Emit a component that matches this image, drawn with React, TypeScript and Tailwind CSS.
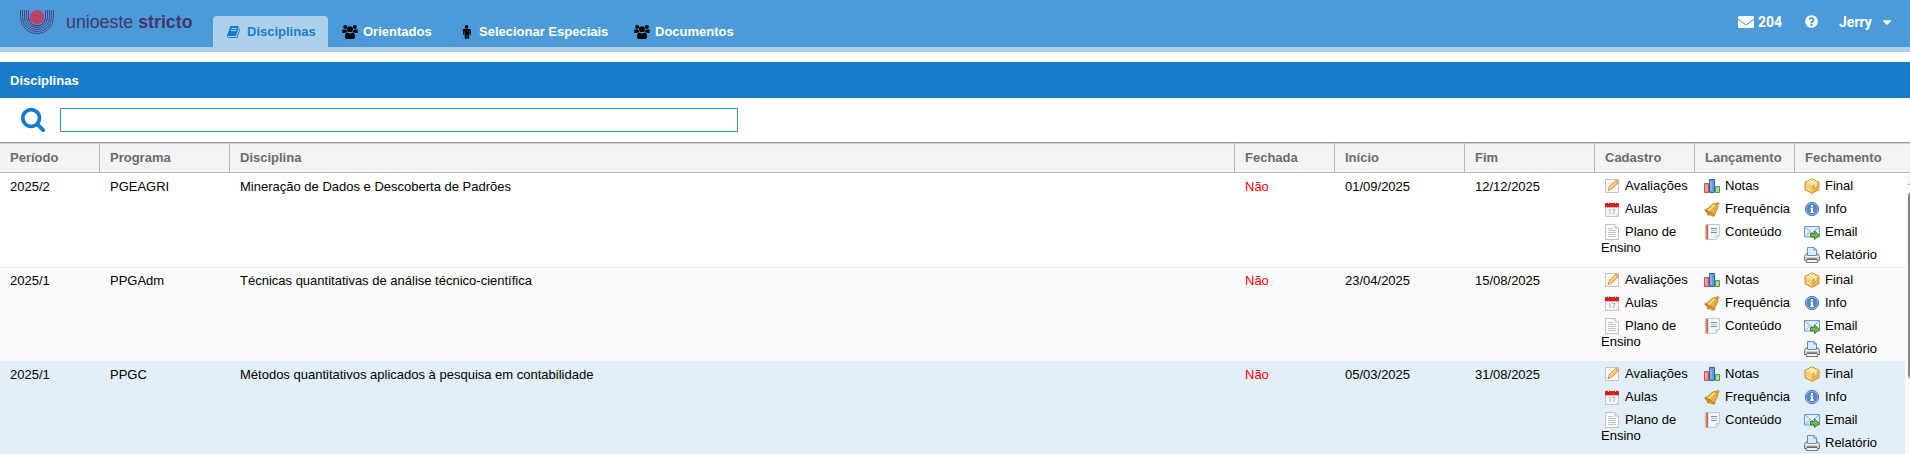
import type { ReactNode } from 'react';
import { FaCaretDown, FaEnvelope, FaQuestionCircle } from 'react-icons/fa';

type IconProps = { name: string };

interface Course {
  period: string;
  program: string;
  title: string;
  start: string;
  end: string;
  rowClass: string;
}

const COURSES: Course[] = [
  {
    period: '2025/2',
    program: 'PGEAGRI',
    title: 'Mineração de Dados e Descoberta de Padrões',
    start: '01/09/2025',
    end: '12/12/2025',
    rowClass: 'bg-white border-t-white',
  },
  {
    period: '2025/1',
    program: 'PPGAdm',
    title: 'Técnicas quantitativas de análise técnico-científica',
    start: '23/04/2025',
    end: '15/08/2025',
    rowClass: 'bg-[#fafafa] border-t-[#ededed]',
  },
  {
    period: '2025/1',
    program: 'PPGC',
    title: 'Métodos quantitativos aplicados à pesquisa em contabilidade',
    start: '05/03/2025',
    end: '31/08/2025',
    rowClass: 'bg-[#e2eef8] border-t-[#e2eef8]',
  },
];

const HEADERS = [
  'Período',
  'Programa',
  'Disciplina',
  'Fechada',
  'Início',
  'Fim',
  'Cadastro',
  'Lançamento',
  'Fechamento',
];

const GRID = 'grid grid-cols-[100px_130px_1005px_100px_130px_130px_100px_100px_1fr]';

function Logo() {
  return (
    <svg width="34" height="24" viewBox="0 0 34 24" fill="none">
      <g stroke="#4d3a78" strokeWidth="0.9">
        <path d="M.5 0v7.500a16.500 16 0 0 0 33 0V0" />
        <path d="M2.500 0v7.500a14.500 14 0 0 0 29 0V0" />
        <path d="M4.500 0v7.500a12.500 12 0 0 0 25 0V0" />
        <path d="M6.500 0v7.500a10.500 10 0 0 0 21 0V0" />
        <path d="M8.500 0v7.500a8.500 8.300 0 0 0 17 0V0" />
      </g>
      <circle cx="17" cy="7.200" r="8" fill="#4c9bd8" />
      <path d="M8.500 7.500a8.500 8.300 0 0 0 17 0" stroke="#4d3a78" strokeWidth="0.9" />
      <circle cx="17" cy="7.200" r="7.200" fill="#b84468" />
    </svg>
  );
}

function BookIcon() {
  return (
    <svg width="14" height="14" viewBox="0 0 1792 1792" fill="currentColor">
      <path d="M1639 478q40 57 18 129l-275 906q-19 64-76.5 107.5t-122.5 43.5h-923q-77 0-148.5-53.5t-99.5-131.5q-24-67-2-127 0-4 3-27t4-37q1-8-3-21.5t-3-19.5q2-11 8-21t16.5-23.5 16.5-23.5q23-38 45-91.5t30-91.5q3-10 .5-30t-.5-28q3-11 17-28t17-23q21-36 42-92t25-90q1-9-2.5-32t.5-28q4-13 22-30.5t22-22.5q19-26 42.5-84.5t27.5-96.500q1-8-3-25.5t-2-26.5q2-8 9-18t18-23 17-21q8-12 16.5-30.5t15-35 16-36 19.5-32 26.5-23.5 36-11.5 47.5 5.5l-1 3q38-9 51-9h761q74 0 114 56t18 130l-274 906q-36 119-71.5 153.5t-128.5 34.5h-869q-27 0-38 15-11 16-1 43 24 70 144 70h923q29 0 56-15.5t35-41.5l300-987q7-22 5-57 38 15 59 43zm-1064 2q-4 13 2 22.5t20 9.5h608q13 0 25.5-9.5t16.5-22.5l21-64q4-13-2-22.5t-20-9.5h-608q-13 0-25.5 9.5t-16.5 22.5zm-83 256q-4 13 2 22.5t20 9.5h608q13 0 25.5-9.5t16.5-22.5l21-64q4-13-2-22.5t-20-9.5h-608q-13 0-25.5 9.5t-16.5 22.5z" />
    </svg>
  );
}

function SearchIcon() {
  return (
    <svg width="26" height="26" viewBox="0 0 1792 1792" fill="#177dca" className="mr-[14px] -mt-[2px]">
      <path d="M1216 832q0-185-131.5-316.5t-316.5-131.5-316.5 131.5-131.5 316.5 131.5 316.5 316.5 131.5 316.5-131.5 131.5-316.5zm512 832q0 52-38 90t-90 38q-54 0-90-38l-343-342q-179 124-399 124-143 0-273.5-55.5t-225-150-150-225-55.5-273.5 55.5-273.5 150-225 225-150 273.5-55.5 273.5 55.5 225 150 150 225 55.5 273.5q0 220-124 399l343 343q37 37 37 90z" />
    </svg>
  );
}

function GroupIcon() {
  return (
    <svg width="16" height="14" viewBox="0 0 16 14" fill="#000">
      <circle cx="3.2" cy="2.1" r="2" />
      <circle cx="12.8" cy="2.1" r="2" />
      <circle cx="8" cy="4.2" r="2.9" />
      <path d="M.3 7.4V5.6C.3 4.7.8 4.3 1.4 4.3c.7.5 2 .7 3 .3.1 1 .4 1.8 1 2.4-.9 0-1.7.3-2.2.9H1.1c-.5 0-.8-.2-.8-.5zM15.700 7.400V5.600c0-.9-.5-1.300-1.100-1.300-.7.5-2 .7-3 .3-.1 1-.4 1.800-1 2.400.9 0 1.700.3 2.200.9h2.100c.5 0 .8-.2.8-.5zM3 12c0-2.400.6-4.300 2.300-4.500 1.500 1.300 3.900 1.300 5.400 0C12.400 7.700 13 9.600 13 12c0 1.300-.8 2-2 2H5c-1.200 0-2-.7-2-2z" />
    </svg>
  );
}

function PersonIcon() {
  return (
    <svg width="9" height="14" viewBox="0 0 9 14" fill="#000">
      <circle cx="4.500" cy="1.900" r="1.800" />
      <path d="M2 4h5c1.100 0 1.900.8 1.900 1.900v3.400c0 .9-1.300.9-1.300 0V6.200h-.4v7c0 1-1.900 1-1.900.1V9.500h-.6v3.800c0 .9-1.900.9-1.900-.1v-7h-.4v3.100c0 .9-1.300.9-1.300 0V5.900C.1 4.800.9 4 2 4z" />
    </svg>
  );
}

function ActionIcon({ name }: IconProps) {
  return (
    <svg width="16" height="16" viewBox="0 0 16 16" fill="none">
      {name === 'Avaliações' && (
        <>
          <path d="M1.500 1.500h13v13h-13z" fill="#f9f9f9" stroke="#c4c4c4" />
          <path d="M4 5h5M4 7.500h3" stroke="#ddd" />
          <path d="M4 12.500l.9-3.400 7.300-7.300 2.500 2.500-7.300 7.300z" fill="#f3c45c" stroke="#bd8630" strokeWidth=".7" />
          <path d="M6 9.800l6.700-6.700" stroke="#ffe9a2" />
          <path d="M11.300 2.700l1-1 2.500 2.500-1 1z" fill="#e4947c" />
          <path d="M4 12.500l.9-3 2 2z" fill="#ead4ad" />
          <path d="M4 12.500l.4-1.200.8.800z" fill="#333" />
        </>
      )}
      {name === 'Aulas' && (
        <>
          <path d="M1.500 5h13v10.500h-13z" fill="#f5f5f5" stroke="#c6c6c6" />
          <path d="M1 2h14v4H1z" fill="#e02222" />
          <path d="M1 5.300h14v1H1z" fill="#c41c1c" />
          <path d="M3 1.500h2.500v2.300H3zM10.500 1.500H13v2.300h-2.500z" fill="#8e1515" />
          <path d="M3.700.5h1v2.500h-1zM11.200.5h1v2.500h-1z" fill="#eee" />
          <path d="M5 9l1-.6v4.600M8 8.500h3L9.300 13" stroke="#aaa" strokeWidth=".9" />
          <path d="M11.500 15.500l3-3v3z" fill="#ccc" />
        </>
      )}
      {name === 'Plano de Ensino' && (
        <>
          <path d="M1.500.5h9.500l3.500 3.500v11.500h-13z" fill="#fafafa" stroke="#c3c3c3" />
          <path d="M11 .5V4h3.500" fill="#eee" stroke="#c3c3c3" />
          <path d="M4 4.500h5M4 6.500h8M4 8.500h8M4 10.500h8M4 12.500h8" stroke="#c4c4c4" />
        </>
      )}
      {name === 'Notas' && (
        <>
          <path d="M.5 5.500h4v9h-4z" fill="#ef8b8b" stroke="#d54a50" />
          <path d="M5.500 1.500h5v13h-5z" fill="#6299dc" stroke="#2f66b0" />
          <path d="M7 3v10" stroke="#a5c9f2" />
          <path d="M11.500 8.500h4v6h-4z" fill="#a3d58e" stroke="#4c9c43" />
          <path d="M2 7v6M13 10.500v3" stroke="#fff" strokeOpacity=".45" />
        </>
      )}
      {name === 'Frequência' && (
        <>
          <path d="M11 3.500l2.800-2.300 1.400 1.500-2.300 2.600z" fill="#e9a83a" stroke="#b5731b" strokeWidth=".7" />
          <path d="M.8 8.700C5 7.800 6.600 3.500 10 2.500c2.500-.4 4.300 1.500 3.800 4-.5 3-3.200 4.200-3 8.200-1 .9-3.200.3-5.700-1.400C2.600 11.700.8 9.900.8 8.700z" fill="#eaad3d" stroke="#b87920" strokeWidth=".8" />
          <path d="M4.500 9.500C7.500 8 8 5.500 10.500 4" stroke="#ffe596" strokeWidth="1.500" />
          <path d="M1.300 9.300c2 .5 7 3 9 5.200" stroke="#a9661a" />
          <circle cx="4.500" cy="13" r="1.500" fill="#c98521" />
        </>
      )}
      {name === 'Conteúdo' && (
        <>
          <path d="M4 .5h11.500v11l-3.500 4H4z" fill="#f4f7fa" stroke="#c2c8ce" />
          <path d="M1.500.5H4v15H1.500z" fill="#bd6a42" />
          <path d="M.5 2h2.500M.5 4h2.500M.5 6h2.500M.5 8h2.500M.5 10h2.500M.5 12h2.500M.5 14h2.500" stroke="#e6c3ad" strokeWidth=".8" />
          <path d="M7 4.500h6M7 8.500h6" stroke="#5b93d6" />
          <path d="M7 6.500h6" stroke="#9fc1e8" />
          <path d="M12 15.500v-4h3.500" fill="#dde3ea" stroke="#c2c8ce" />
        </>
      )}
      {name === 'Final' && (
        <>
          <path d="M8 .8l7 3.400v7.500l-7 3.700-7-3.700V4.200z" fill="#f7cd71" stroke="#c68a2d" />
          <path d="M8 1.300l6.500 3.100L8 7.800 1.500 4.400z" fill="#fbe0a0" />
          <path d="M8 7.800v7.100l6.500-3.400V4.400z" fill="#eab04a" />
          <path d="M4.300 3l6.700 3.300v3l1.500-.8V5.500L6 2.200z" fill="#fff1ca" />
          <path d="M3 10.500l2.500 1.300" stroke="#fff0c4" />
        </>
      )}
      {name === 'Info' && (
        <>
          <circle cx="8" cy="8" r="6.700" fill="#b9cfeb" stroke="#4877b3" />
          <circle cx="8" cy="8" r="5.200" fill="#5688c7" stroke="#3e6dab" strokeWidth=".6" />
          <path d="M7 4h2v1.700H7zM6.500 6.700H9v4h.8V12H6.300v-1.300H7V8h-.5z" fill="#fff" />
        </>
      )}
      {name === 'Email' && (
        <>
          <path d="M.5 2.500h15v10.500H.5z" fill="#e3effb" stroke="#6d9bd0" />
          <path d="M1 3l7 6 7-6M1 12.500l5-4.500M15 12.500L10 8" stroke="#80aadb" />
          <path d="M6.500 9.500h4V7l5 4.400-5 4.100V13h-4z" fill="#72b854" stroke="#37802e" />
        </>
      )}
      {name === 'Relatório' && (
        <>
          <path d="M1.500 7.500l2-1.500h9l2 1.500 1 2v4H.5v-4z" fill="#cfcfd1" stroke="#77777b" />
          <path d="M3.500 8.500v-8h6.500l2.500 2.500v5.500z" fill="#d9eafb" stroke="#5d8fcb" />
          <path d="M10 .5V3h2.500" stroke="#5d8fcb" />
          <path d="M1.500 9.500h13" stroke="#f7f7f7" />
          <path d="M3 12.500h10l1 3H2z" fill="#f6f6f6" stroke="#77777b" />
          <path d="M3 12h10" stroke="#55555a" />
        </>
      )}
    </svg>
  );
}

function Action({ name }: IconProps) {
  return (
    <a href="#" className="block pb-[7px] leading-4 text-black">
      <span className="ml-[3px] mr-[5px] inline-block h-4 w-4 align-top">
        <ActionIcon name={name} />
      </span>
      {name}
    </a>
  );
}

function Tab({ icon, label, width }: { icon: ReactNode; label: string; width: string }) {
  return (
    <a href="#" className={`flex items-center whitespace-nowrap ${width}`}>
      <span className="mr-[5px] flex w-4 justify-center">{icon}</span>
      {label}
    </a>
  );
}

export default function App() {
  return (
    <div className="h-[454px] w-full overflow-hidden bg-white font-['Liberation_Sans',Arial,sans-serif] text-[13px] text-black">
      <header className="flex h-[52px] border-b-[5px] border-[#add1ed] bg-[#4c9bd8]">
        <a href="#" className="flex w-[213px] items-start pl-5 pt-[10px]">
          <Logo />
          <span className="ml-3 mt-px whitespace-nowrap text-[17.8px] leading-[22px] text-[#44366f]">
            unioeste <b>stricto</b>
          </span>
        </a>
        <nav className="flex items-end font-bold text-white">
          <a href="#" className="flex h-[31px] w-[115px] items-center rounded-t bg-[#add1ed] pl-[14px] text-[#177dca]">
            <span className="mr-[6px]">
              <BookIcon />
            </span>
            Disciplinas
          </a>
          <div className="flex h-[31px] items-center pl-[14px]">
            <Tab icon={<GroupIcon />} label="Orientados" width="w-[116px]" />
            <Tab icon={<PersonIcon />} label="Selecionar Especiais" width="w-[176px]" />
            <Tab icon={<GroupIcon />} label="Documentos" width="w-[117px]" />
          </div>
        </nav>
        <div className="ml-auto flex h-11 items-center font-['Roboto',sans-serif] text-sm font-bold text-white">
          <FaEnvelope size={16} className="mr-1" />
          <span className="w-[47px]">204</span>
          <FaQuestionCircle size={13} className="-mt-px mr-[21px]" />
          <span className="w-[41px]">Jerry</span>
          <FaCaretDown size={14} className="mr-[16px]" />
        </div>
      </header>

      <h1 className="mt-[10px] flex h-9 items-center bg-[#177dca] pl-[10px] pt-px font-bold text-white">Disciplinas</h1>

      <div className="flex h-11 items-center pl-[20px]">
        <SearchIcon />
        <input type="text" className="h-6 w-[678px] border border-[#3a8fd0] bg-white px-1 outline-none" />
      </div>

      <div className={`${GRID} h-[31px] border-b border-t border-b-[#b8b8b8] border-t-[#999] bg-[#f4f4f4] shadow-[inset_0_1px_1px_#ccc]`}>
        {HEADERS.map((header) => (
          <div
            key={header}
            className="flex items-center border-r border-[#b8b8b8] pl-[10px] font-bold text-[#6b6b6b] last:border-r-0"
          >
            {header}
          </div>
        ))}
      </div>

      <div className="flex h-[281px] overflow-hidden">
        <div className="w-[1905px] shrink-0">
          {COURSES.map((course) => (
            <div key={course.title} className={`${GRID} h-[94px] border-t leading-[15px] ${course.rowClass}`}>
              <div className="pl-[10px] pt-[5px]">{course.period}</div>
              <div className="pl-[10px] pt-[5px]">{course.program}</div>
              <div className="pl-[10px] pt-[5px]">{course.title}</div>
              <div className="pl-[10px] pt-[5px] text-[#f00]">Não</div>
              <div className="pl-[10px] pt-[5px]">{course.start}</div>
              <div className="pl-[10px] pt-[5px]">{course.end}</div>
              <div className="pl-[6px] pt-1">
                <Action name="Avaliações" />
                <Action name="Aulas" />
                <Action name="Plano de Ensino" />
              </div>
              <div className="pl-[6px] pt-1">
                <Action name="Notas" />
                <Action name="Frequência" />
                <Action name="Conteúdo" />
              </div>
              <div className="pl-[6px] pt-1">
                <Action name="Final" />
                <Action name="Info" />
                <Action name="Email" />
                <Action name="Relatório" />
              </div>
            </div>
          ))}
        </div>
        {/* Scrollbar */}
        <div className="w-[5px] overflow-hidden bg-[#fafafa] pl-[3px] pt-[8px]">
          <svg width="8" height="4" viewBox="0 0 8 4" className="max-w-none">
            <path d="M0 4l4-4 4 4z" fill="#868686" />
          </svg>
          <div className="mt-[7px] h-[187px] w-[8px] rounded bg-[#868686]" />
        </div>
      </div>
    </div>
  );
}
